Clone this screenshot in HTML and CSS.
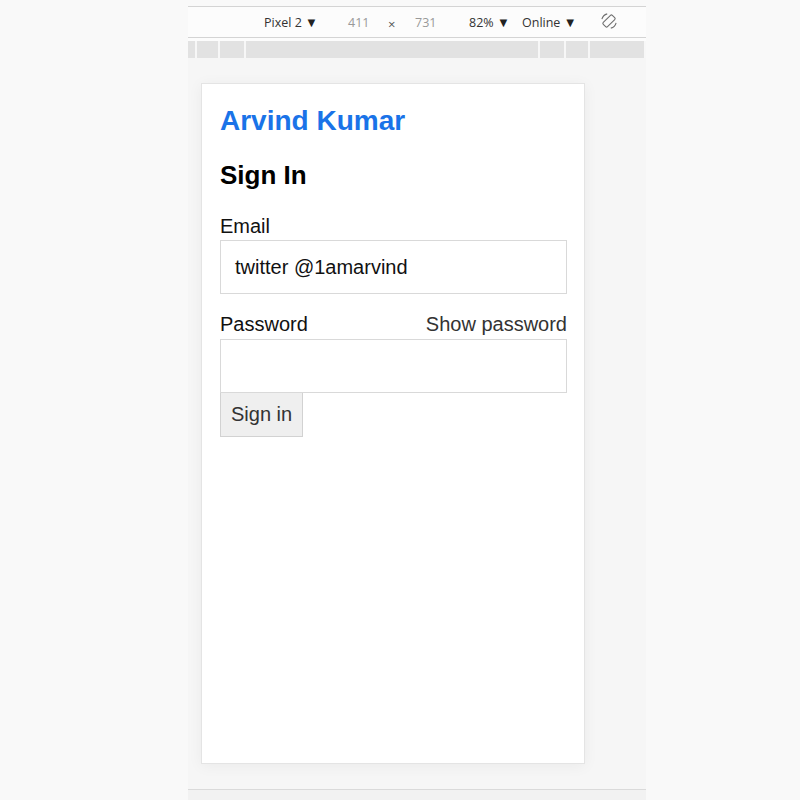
FILE: index.html
```html
<!DOCTYPE html>
<html>
<head>
<meta charset="utf-8">
<link rel="stylesheet" href="styles.css">
</head>
<body>
<div class="column">
  <div class="top-space"></div>
  <div class="toolbar">
    <span class="tb-item device">Pixel 2 <span class="caret">▼</span></span>
    <span class="tb-item dim w">411</span>
    <span class="tb-item times">×</span>
    <span class="tb-item dim h">731</span>
    <span class="tb-item zoom">82% <span class="caret">▼</span></span>
    <span class="tb-item online">Online <span class="caret">▼</span></span>
    <span class="tb-item rotate">
      <svg width="18" height="18" viewBox="0 0 18 18" fill="none" stroke="#6f6f6f" stroke-width="1.1">
        <rect x="6" y="2.6" width="6" height="12.8" rx="1.3" transform="rotate(45 9 9)"/>
        <path d="M1.9 7.2 A7.3 7.3 0 0 1 7.2 1.9"/>
        <path d="M16.1 10.8 A7.3 7.3 0 0 1 10.8 16.1"/>
      </svg>
    </span>
  </div>
  <div class="gap"></div>
  <div class="ruler">
    <span class="seg s1"></span>
    <span class="seg s2"></span>
    <span class="seg s3"></span>
    <span class="seg s4"></span>
    <span class="seg s5"></span>
    <span class="seg s6"></span>
    <span class="seg s7"></span>
  </div>
  <div class="stage">
    <div class="device-card">
      <h1 class="brand">Arvind Kumar</h1>
      <h2 class="heading">Sign In</h2>
      <label class="label email-label">Email</label>
      <div class="field">twitter @1amarvind</div>
      <div class="pw-row">
        <span class="label">Password</span>
        <span class="show">Show password</span>
      </div>
      <div class="field pw-field"></div>
      <div class="btn-row"><button class="btn">Sign in</button></div>
    </div>
  </div>
  <div class="bottom"></div>
</div>
</body>
</html>
```

FILE: styles.css
```css
html, body {
  margin: 0;
  padding: 0;
  background: #f9f9f9;
}
body {
  font-family: "Liberation Sans", Arial, sans-serif;
  height: 800px;
  overflow: hidden;
}
.column {
  margin-left: 188px;
  width: 458px;
  display: flex;
  flex-direction: column;
}
.top-space {
  height: 6px;
}
.toolbar {
  height: 30px;
  border-top: 1px solid #d4d4d4;
  border-bottom: 1px solid #d4d4d4;
  background: #fcfcfc;
  font-family: "Open Sans", "Noto Sans", sans-serif;
  font-size: 12.5px;
  color: #333;
  position: relative;
}
.tb-item {
  position: absolute;
  top: 7px;
  line-height: 16px;
  white-space: nowrap;
}
.caret {
  font-size: 13px;
  color: #222;
}
.device { left: 76px; }
.dim { color: #999; top: 8px; }
.w { left: 160px; }
.times { left: 200px; top: 9px; color: #555; font-size: 13px; }
.h { left: 227px; }
.zoom { left: 281px; }
.online { left: 334px; }
.rotate { left: 412px; top: 5px; line-height: 0; }
.gap {
  height: 3px;
  background: #fcfcfc;
}
.ruler {
  height: 17px;
  background: #e2e2e2;
  position: relative;
}
.seg {
  position: absolute;
  top: 0;
  width: 2px;
  height: 17px;
  background: #f7f7f7;
}
.s1 { left: 7px; }
.s2 { left: 30px; }
.s3 { left: 56px; }
.s4 { left: 350px; }
.s5 { left: 376px; }
.s6 { left: 400px; }
.s7 { left: 456px; }
.stage {
  height: 731px;
  background: #f6f6f6;
  padding: 25px 0 0 13px;
  box-sizing: border-box;
}
.device-card {
  width: 384px;
  height: 681px;
  box-sizing: border-box;
  background: #fff;
  border: 1px solid #e4e4e4;
  box-shadow: 0 2px 14px rgba(0, 0, 0, 0.05);
  padding: 21px 17px 0 18px;
  display: flex;
  flex-direction: column;
}
.brand {
  margin: 0;
  font-size: 28px;
  line-height: 32px;
  font-weight: bold;
  color: #1a73e8;
}
.heading {
  margin: 23px 0 0;
  font-size: 26px;
  line-height: 30px;
  font-weight: bold;
  color: #000;
}
.label {
  font-size: 20px;
  line-height: 23px;
  color: #111;
}
.email-label {
  margin-top: 25px;
}
.field {
  margin-top: 2px;
  height: 54px;
  box-sizing: border-box;
  border: 1px solid #d9d9d9;
  padding-left: 14px;
  display: flex;
  align-items: center;
  font-size: 20px;
  color: #111;
}
.pw-field {
  margin-top: 3px;
}
.pw-row {
  margin-top: 19px;
  display: flex;
  justify-content: space-between;
}
.show {
  font-size: 20px;
  line-height: 23px;
  color: #333;
}
.btn-row {
  display: flex;
}
.btn {
  height: 44px;
  box-sizing: border-box;
  background: #efefef;
  border: 1px solid #d2d2d2;
  border-top: none;
  font-family: "Liberation Sans", Arial, sans-serif;
  font-size: 20px;
  color: #333;
  padding: 0 10px;
  white-space: nowrap;
}
.bottom {
  height: 11px;
  border-top: 1px solid #dadada;
  background: #f2f2f2;
}
```
